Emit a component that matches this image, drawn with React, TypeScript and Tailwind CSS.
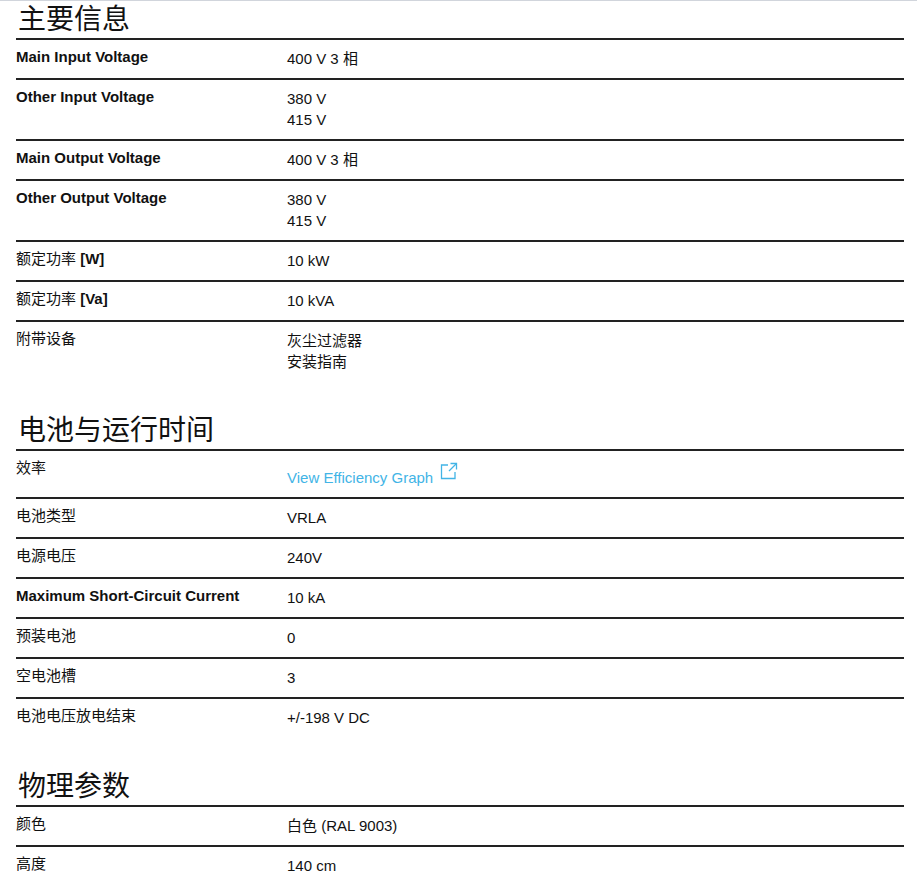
import React from "react";

type Row = { label: React.ReactNode; key: string; bold?: boolean; values: React.ReactNode[]; link?: boolean };

const sections: { title: string; rows: Row[] }[] = [
  {
    title: "主要信息",
    rows: [
      { key: "a", label: "Main Input Voltage", bold: true, values: ["400 V 3 相"] },
      { key: "b", label: "Other Input Voltage", bold: true, values: ["380 V", "415 V"] },
      { key: "c", label: "Main Output Voltage", bold: true, values: ["400 V 3 相"] },
      { key: "d", label: "Other Output Voltage", bold: true, values: ["380 V", "415 V"] },
      { key: "e", label: <>额定功率 <b>[W]</b></>, values: ["10 kW"] },
      { key: "f", label: <>额定功率 <b>[Va]</b></>, values: ["10 kVA"] },
      { key: "g", label: "附带设备", values: ["灰尘过滤器", "安装指南"] },
    ],
  },
  {
    title: "电池与运行时间",
    rows: [
      { key: "h", label: "效率", values: [], link: true },
      { key: "i", label: "电池类型", values: ["VRLA"] },
      { key: "j", label: "电源电压", values: ["240V"] },
      { key: "k", label: "Maximum Short-Circuit Current", bold: true, values: ["10 kA"] },
      { key: "l", label: "预装电池", values: ["0"] },
      { key: "m", label: "空电池槽", values: ["3"] },
      { key: "n", label: "电池电压放电结束", values: ["+/-198 V DC"] },
    ],
  },
  {
    title: "物理参数",
    rows: [
      { key: "o", label: "颜色", values: ["白色 (RAL 9003)"] },
      { key: "p", label: "高度", values: ["140 cm"] },
    ],
  },
];

export default function App() {
  return (
    <div
      className="min-h-[879px] bg-white border-t border-gray-300 pl-4 pr-[13px] text-[#111]"
      style={{ fontFamily: '"Liberation Sans", Arial, "Noto Sans CJK SC", sans-serif' }}
    >
      {sections.map((s) => (
        <div key={s.title} className="mb-[31px]">
          <h2 className="h-[37px] text-[28px] leading-[34px] pt-[2px] pl-[2px]">{s.title}</h2>
          {s.rows.map((r) => (
            <div key={r.key} className="grid grid-cols-[271px_1fr] border-t-2 border-[#222] pt-2 pb-[9px]">
              <div className={`text-[15px] leading-[21px] -mt-[2px] ${r.bold ? "font-bold" : ""}`}>
                {r.label}
              </div>
              <div className="text-[15px] leading-[21px]">
                {r.link ? (
                  <div className="mt-[8px] flex items-start gap-[7px] text-[#42b4e6]">
                    <span>View Efficiency Graph</span>
                    <svg width="18" height="18" viewBox="0 0 18 18" fill="none" stroke="#42b4e6" strokeWidth="1.3" className="-mt-[5px]">
                      <path d="M8 3H1.5V16.5H15V10" />
                      <path d="M10.5 1.5H16.5V7.5" />
                      <path d="M16.5 1.5L9 9" />
                    </svg>
                  </div>
                ) : (
                  r.values.map((v, i) => <div key={i}>{v}</div>)
                )}
              </div>
            </div>
          ))}
        </div>
      ))}
    </div>
  );
}
